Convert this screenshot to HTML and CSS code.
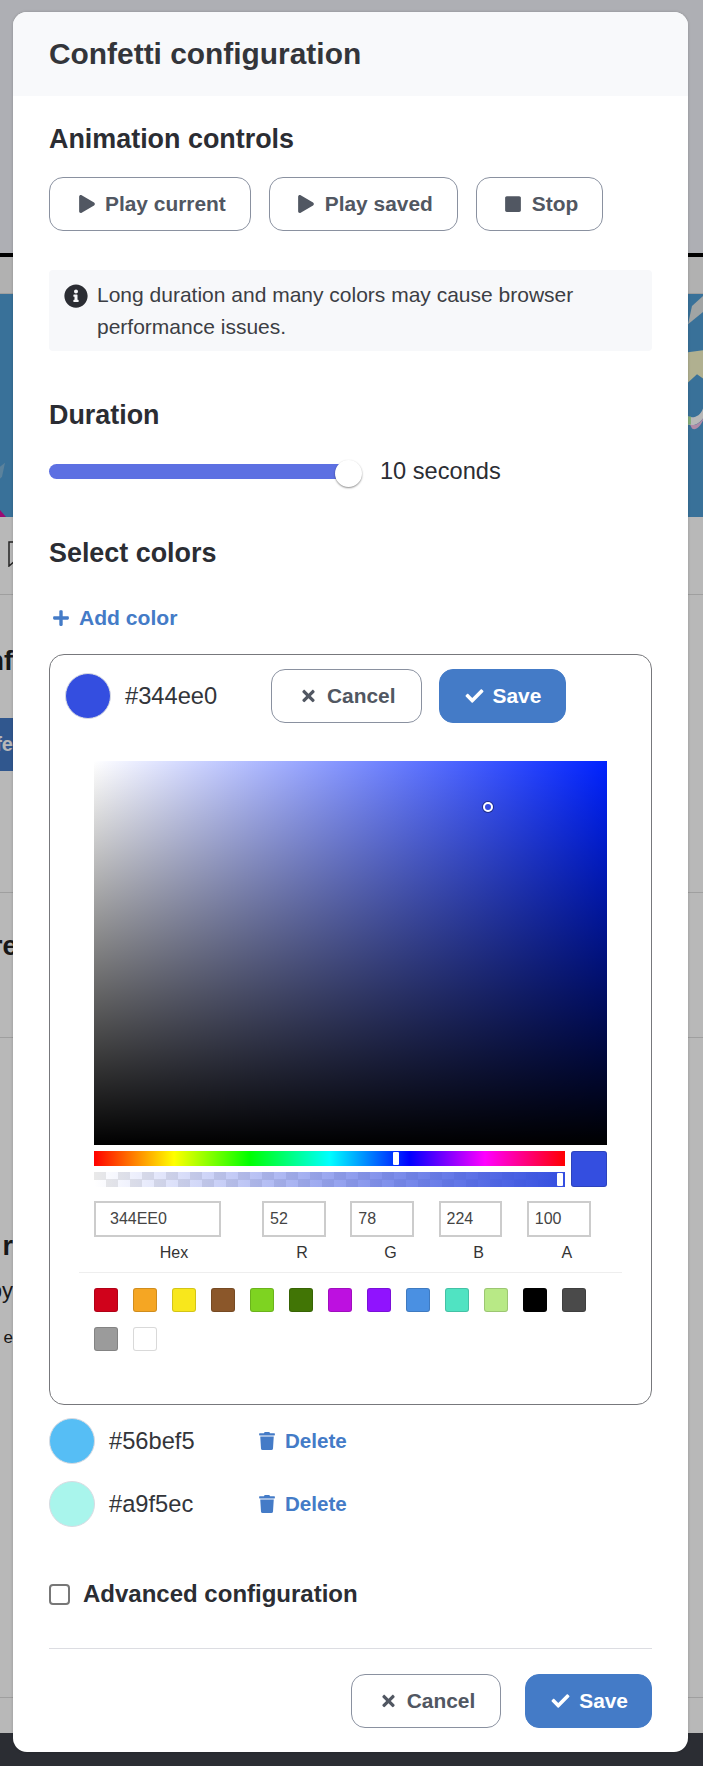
FILE: index.html
```html
<!DOCTYPE html>
<html lang="en">
<head>
<meta charset="utf-8">
<title>Confetti configuration</title>
<link rel="stylesheet" href="styles.css">
</head>
<body>
<div class="page">
  <div class="bg-top"></div>
  <div class="bg-rule"></div>
  <div class="bg-nav"></div>
  <svg class="bg-hero" viewBox="0 0 703 222" preserveAspectRatio="none">
    <rect width="703" height="222" fill="#4f9dd4"/>
    <path d="M0 215 L6 222 L0 222Z" fill="#d80fa0"/>
    <path d="M0 172 L5 168 L2 182 L0 184Z" fill="#7fb4d8"/>
    <path d="M703 2 L703 18 L688 30 L692 12Z" fill="#dfe3e3"/>
    <path d="M688 58 L703 56 L703 84 L697 80 L688 88Z" fill="#f4f4c8"/>
    <path d="M688 122 C694 124 700 122 703 114 L703 124 C698 130 694 132 688 130Z" fill="#fff"/>
    <path d="M688 122 L691 122 L691 130 L688 130Z" fill="#b8f0a8"/>
    <path d="M690 130 C696 132 700 128 703 124 L703 126 C700 132 696 136 692 134Z" fill="#f4c0e8"/>
  </svg>
  <div class="bg-bar">
    <svg class="bg-flag" viewBox="0 0 8 26"><path d="M8 1H1V25L8 19" fill="none" stroke="#333" stroke-width="1.5"/></svg>
  </div>
  <div class="bg-sec bg-sec-a">
    <div class="clip clip-h">nf</div>
    <div class="clip bg-btn">fe</div>
  </div>
  <div class="bg-sec bg-sec-b"><div class="clip clip-h clip-re">re</div></div>
  <div class="bg-sec bg-sec-c">
    <div class="clip clip-h">r</div>
    <div class="clip clip-t">py</div>
    <div class="clip clip-s">e</div>
  </div>
  <div class="bg-foot-light"></div>
  <div class="bg-foot"></div>

  <div class="overlay"></div>

  <div class="modal">
    <header class="modal-head"><h1>Confetti configuration</h1></header>
    <div class="modal-body">
      <h2 class="h-anim">Animation controls</h2>
      <div class="btn-row">
        <button class="btn btn-outline"><span class="ico"><svg width="16" height="18" viewBox="0 0 448 512"><path d="M424.4 214.7L72.4 6.6C43.8-10.3 0 6.1 0 47.9V464c0 37.5 40.7 60.1 72.4 41.3l352-208c31.4-18.5 31.5-64.1 0-82.6z"/></svg></span>Play current</button>
        <button class="btn btn-outline"><span class="ico"><svg width="16" height="18" viewBox="0 0 448 512"><path d="M424.4 214.7L72.4 6.6C43.8-10.3 0 6.1 0 47.9V464c0 37.5 40.7 60.1 72.4 41.3l352-208c31.4-18.5 31.5-64.1 0-82.6z"/></svg></span>Play saved</button>
        <button class="btn btn-outline"><span class="ico"><svg width="16" height="18" viewBox="0 0 448 512"><path d="M400 32H48C21.5 32 0 53.5 0 80v352c0 26.5 21.5 48 48 48h352c26.5 0 48-21.5 48-48V80c0-26.5-21.5-48-48-48z"/></svg></span>Stop</button>
      </div>
      <div class="notice">
        <svg class="notice-ico" width="24" height="24" viewBox="0 0 512 512"><path d="M256 8C119.043 8 8 119.083 8 256c0 136.997 111.043 248 248 248s248-111.003 248-248C504 119.083 392.957 8 256 8zm0 110c23.196 0 42 18.804 42 42s-18.804 42-42 42-42-18.804-42-42 18.804-42 42-42zm56 254c0 6.627-5.373 12-12 12h-88c-6.627 0-12-5.373-12-12v-24c0-6.627 5.373-12 12-12h12v-64h-12c-6.627 0-12-5.373-12-12v-24c0-6.627 5.373-12 12-12h64c6.627 0 12 5.373 12 12v100h12c6.627 0 12 5.373 12 12v24z"/></svg>
        <p>Long duration and many colors may cause browser performance issues.</p>
      </div>
      <h2 class="h-dur">Duration</h2>
      <div class="dur-row">
        <div class="slider"><div class="track"></div><div class="thumb"></div></div>
        <span class="dur-val">10 seconds</span>
      </div>
      <h2 class="h-col">Select colors</h2>
      <div class="add-color"><span class="ico ico-add"><svg width="16" height="18" viewBox="0 0 448 512"><path d="M416 208H272V64c0-17.67-14.33-32-32-32h-32c-17.67 0-32 14.33-32 32v144H32c-17.67 0-32 14.33-32 32v32c0 17.67 14.33 32 32 32h144v144c0 17.67 14.33 32 32 32h32c17.67 0 32-14.33 32-32V304h144c17.67 0 32-14.33 32-32v-32c0-17.67-14.33-32-32-32z"/></svg></span>Add color</div>

      <div class="card">
        <div class="card-row">
          <span class="dot dot-a"></span>
          <span class="hex hex-card">#344ee0</span>
          <div class="card-btns">
            <button class="btn btn-outline"><span class="ico"><svg width="13" height="18" viewBox="0 0 352 512"><path d="M242.72 256l100.07-100.07c12.28-12.28 12.28-32.19 0-44.48l-22.24-22.24c-12.28-12.28-32.19-12.28-44.48 0L176 189.28 75.93 89.21c-12.28-12.28-32.19-12.28-44.48 0L9.21 111.45c-12.28 12.28-12.28 32.19 0 44.48L109.28 256 9.21 356.07c-12.28 12.28-12.28 32.19 0 44.48l22.24 22.24c12.28 12.28 32.2 12.28 44.48 0L176 322.72l100.07 100.07c12.28 12.28 32.2 12.28 44.48 0l22.24-22.24c12.28-12.28 12.28-32.19 0-44.48L242.72 256z"/></svg></span>Cancel</button>
            <button class="btn btn-solid"><span class="ico"><svg width="19" height="18" viewBox="0 0 512 512"><path d="M173.898 439.404l-166.4-166.4c-9.997-9.997-9.997-26.206 0-36.204l36.203-36.204c9.997-9.998 26.207-9.998 36.204 0L192 312.69 432.095 72.596c9.997-9.997 26.207-9.997 36.204 0l36.203 36.204c9.997 9.997 9.997 26.206 0 36.204l-294.4 294.401c-9.998 9.997-26.207 9.997-36.204-.001z"/></svg></span>Save</button>
          </div>
        </div>
        <div class="picker">
          <div class="picker-main">
            <div class="sat"><span class="sat-ptr"></span></div>
            <div class="sliders">
              <div class="bars">
                <div class="bar hue"><span class="bar-ptr hue-ptr"></span></div>
                <div class="bar alpha"><span class="bar-ptr alpha-ptr"></span></div>
              </div>
              <div class="preview"></div>
            </div>
            <div class="fields">
              <label class="field field-hex"><input class="inp inp-hex" value="344EE0" aria-label="Hex"><span>Hex</span></label>
              <label class="field"><input class="inp" value="52" aria-label="R"><span>R</span></label>
              <label class="field"><input class="inp" value="78" aria-label="G"><span>G</span></label>
              <label class="field"><input class="inp" value="224" aria-label="B"><span>B</span></label>
              <label class="field"><input class="inp" value="100" aria-label="A"><span>A</span></label>
            </div>
          </div>
          <div class="presets">
            <span class="preset p1"></span><span class="preset p2"></span><span class="preset p3"></span><span class="preset p4"></span><span class="preset p5"></span><span class="preset p6"></span><span class="preset p7"></span><span class="preset p8"></span><span class="preset p9"></span><span class="preset p10"></span><span class="preset p11"></span><span class="preset p12"></span><span class="preset p13"></span><span class="preset p14"></span><span class="preset p15"></span>
          </div>
        </div>
      </div>

      <div class="color-row">
        <span class="dot dot-b"></span>
        <span class="hex hex-list">#56bef5</span>
        <span class="del"><span class="ico"><svg width="16" height="18" viewBox="0 0 448 512"><path d="M432 32H312l-9.4-18.7A24 24 0 0 0 281.1 0H166.8a23.72 23.72 0 0 0-21.4 13.3L136 32H16A16 16 0 0 0 0 48v32a16 16 0 0 0 16 16h416a16 16 0 0 0 16-16V48a16 16 0 0 0-16-16zM53.2 467a48 48 0 0 0 47.9 45h245.8a48 48 0 0 0 47.9-45L416 128H32z"/></svg></span>Delete</span>
      </div>
      <div class="color-row">
        <span class="dot dot-c"></span>
        <span class="hex hex-list">#a9f5ec</span>
        <span class="del"><span class="ico"><svg width="16" height="18" viewBox="0 0 448 512"><path d="M432 32H312l-9.4-18.7A24 24 0 0 0 281.1 0H166.8a23.72 23.72 0 0 0-21.4 13.3L136 32H16A16 16 0 0 0 0 48v32a16 16 0 0 0 16 16h416a16 16 0 0 0 16-16V48a16 16 0 0 0-16-16zM53.2 467a48 48 0 0 0 47.9 45h245.8a48 48 0 0 0 47.9-45L416 128H32z"/></svg></span>Delete</span>
      </div>

      <div class="adv"><span class="check"></span><span class="adv-label">Advanced configuration</span></div>
      <div class="foot">
        <button class="btn btn-outline"><span class="ico"><svg width="13" height="18" viewBox="0 0 352 512"><path d="M242.72 256l100.07-100.07c12.28-12.28 12.28-32.19 0-44.48l-22.24-22.24c-12.28-12.28-32.19-12.28-44.48 0L176 189.28 75.93 89.21c-12.28-12.28-32.19-12.28-44.48 0L9.21 111.45c-12.28 12.28-12.28 32.19 0 44.48L109.28 256 9.21 356.07c-12.28 12.28-12.28 32.19 0 44.48l22.24 22.24c12.28 12.28 32.2 12.28 44.48 0L176 322.72l100.07 100.07c12.28 12.28 32.2 12.28 44.48 0l22.24-22.24c12.28-12.28 12.28-32.19 0-44.48L242.72 256z"/></svg></span>Cancel</button>
        <button class="btn btn-solid"><span class="ico"><svg width="19" height="18" viewBox="0 0 512 512"><path d="M173.898 439.404l-166.4-166.4c-9.997-9.997-9.997-26.206 0-36.204l36.203-36.204c9.997-9.998 26.207-9.998 36.204 0L192 312.69 432.095 72.596c9.997-9.997 26.207-9.997 36.204 0l36.203 36.204c9.997 9.997 9.997 26.206 0 36.204l-294.4 294.401c-9.998 9.997-26.207 9.997-36.204-.001z"/></svg></span>Save</button>
      </div>
    </div>
  </div>
</div>
</body>
</html>
```
FILE: styles.css
```css
* { box-sizing: border-box; }
html, body { margin: 0; padding: 0; }
body { font-family: "Liberation Sans", Arial, sans-serif; color: #2b2d33; background: #fff; }
.page { position: relative; width: 703px; height: 1766px; overflow: hidden; background: #fff; }

/* page behind the dialog */
.bg-top { height: 253px; background: #f2f3fa; }
.bg-rule { height: 4px; background: #000; }
.bg-nav { height: 37px; background: #f6f6f6; border-bottom: 1px solid #ddd; }
.bg-hero { display: block; width: 703px; height: 223px; }
.bg-bar { height: 78px; border-bottom: 1px solid #ddd; padding: 24px 0 0 8px; }
.bg-flag { display: block; width: 8px; height: 26px; }
.bg-sec { border-bottom: 1px solid #ddd; }
.bg-sec-a { height: 298px; padding-top: 50px; }
.bg-sec-b { height: 145px; padding-top: 37px; }
.bg-sec-c { height: 660px; padding-top: 192px; }
.clip { width: 13px; overflow: hidden; display: flex; justify-content: flex-end; white-space: nowrap; }
.clip-h { font-size: 27px; font-weight: 700; line-height: 32px; color: #222; }
.clip-re { display: block; text-indent: -8px; }
.bg-btn { margin-top: 41px; height: 53px; align-items: center; background: #4379c5; color: #fff; font-size: 20px; font-weight: 700; }
.clip-t { margin-top: 15px; font-size: 22px; line-height: 28px; color: #222; }
.clip-s { margin-top: 22px; font-size: 17px; line-height: 22px; color: #222; }
.bg-foot-light { height: 35px; }
.bg-foot { height: 40px; background: #3c3f47; }
.overlay { position: absolute; inset: 0; background: rgba(0, 0, 0, 0.28); }

/* dialog */
.modal { position: absolute; left: 13px; top: 12px; width: 675px; height: 1740px; background: #fff; border-radius: 14px; overflow: hidden; box-shadow: 0 0 3px rgba(0, 0, 0, 0.2); }
.modal-head { height: 84px; background: #f8f9fb; padding: 0 36px; display: flex; align-items: center; }
h1 { margin: 0; font-size: 29.9px; line-height: 36px; font-weight: 700; color: #33353a; }
h2 { margin: 0; font-size: 26.9px; line-height: 34px; font-weight: 700; color: #2b2d33; }
.modal-body { padding: 0 36px; }
.h-anim { padding-top: 26px; }
.btn-row { display: flex; gap: 18px; margin-top: 21px; }
.btn { display: inline-flex; align-items: center; height: 54px; padding: 0 24px 0 23px; border-radius: 14px; border: 1px solid #8a91a0; background: #fff; color: #515762; font: 700 20.9px "Liberation Sans", Arial, sans-serif; }
.btn svg { fill: currentColor; display: block; }
.ico { width: 27px; display: flex; justify-content: center; margin-right: 5px; flex: none; }
.btn-solid { background: #447bc7; border-color: #447bc7; color: #fff; padding: 0 23px 0 21px; }
.card-btns .btn-outline, .foot .btn-outline { padding-right: 25px; }
.card-btns .btn-solid { padding-right: 24px; }
.notice { margin-top: 39px; height: 81px; background: #f7f8fa; border-radius: 4px; padding: 9px 14px 0 15px; display: flex; }
.notice-ico { flex: none; margin: 5px 9px 0 0; fill: #2b2d33; }
.notice p { margin: 0; font-size: 21px; line-height: 32px; color: #3c3e44; }
.h-dur { margin-top: 47px; }
.dur-row { display: flex; align-items: center; margin-top: 24.5px; height: 34px; }
.slider { position: relative; width: 313px; height: 27px; }
.track { position: absolute; left: 0; right: 10px; top: 4px; height: 15px; border-radius: 8px; background: #5d70e2; }
.thumb { position: absolute; right: 0; top: 0; width: 27px; height: 27px; border-radius: 50%; background: #fff; box-shadow: 0 1px 2px rgba(0, 0, 0, 0.45); }
.dur-val { margin-left: 18px; font-size: 23.6px; color: #2b2d33; position: relative; top: -2px; }
.h-col { margin-top: 45.5px; }
.add-color { display: flex; align-items: center; margin-top: 33px; height: 30px; color: #447bc7; font-size: 21.1px; font-weight: 700; }
.add-color svg { fill: currentColor; display: block; }
.ico-add { width: 24px; margin-right: 6px; }

.card { margin-top: 20.5px; height: 751px; border: 1px solid #77787c; border-radius: 15px; padding: 14.5px 0 0 15px; }
.card-row { display: flex; align-items: center; height: 54px; }
.dot { display: block; flex: none; width: 46px; height: 46px; border-radius: 50%; border: 1px solid #d8dbe2; }
.dot-a { background: #344ee0; }
.dot-b { background: #56bef5; }
.dot-c { background: #a9f5ec; }
.hex { font-size: 23.7px; color: #33353a; flex: none; }
.hex-card { margin-left: 14px; width: 146px; }
.card-btns { display: flex; gap: 17px; }
.picker { margin: 23px 0 0 14px; width: 543px; }
.picker-main { padding: 15px 15px 0 15px; }
.sat { position: relative; height: 384px; background: linear-gradient(to top, #000, rgba(0, 0, 0, 0)), linear-gradient(to right, #fff, #0022ff); }
.sat-ptr { position: absolute; left: 389px; top: 41px; width: 10px; height: 10px; border-radius: 50%; border: 2px solid #fff; box-shadow: 0 0 0 1px rgba(0, 0, 0, 0.4); }
.sliders { display: flex; gap: 6px; margin-top: 6px; }
.bars { flex: 1; display: flex; flex-direction: column; gap: 6px; }
.bar { position: relative; height: 15px; }
.hue { background: linear-gradient(to right, #f00 0%, #ff0 17%, #0f0 33%, #0ff 50%, #00f 67%, #f0f 83%, #f00 100%); }
.alpha { background: linear-gradient(to right, rgba(52, 78, 224, 0), #344ee0), repeating-conic-gradient(#fff 0 25%, #e9e9e9 0 50%) 0 0 / 24px 15px; }
.bar-ptr { position: absolute; top: 1px; width: 6px; height: 13px; border-radius: 1px; background: #fff; }
.hue-ptr { left: 299px; }
.alpha-ptr { left: 463px; }
.preview { flex: none; width: 36px; height: 36px; border-radius: 3px; background: #344ee0; box-shadow: inset 0 0 0 1px rgba(0, 0, 0, 0.15); }
.fields { display: flex; margin-top: 14px; }
.field { flex: 1; padding-left: 8px; display: flex; flex-direction: column; align-items: stretch; }
.field-hex { flex: none; width: 160px; padding-left: 0; }
.inp { width: 79.5%; height: 36px; border: 2px solid #ccc; padding: 0 0 0 6px; font: 16px "Liberation Sans", Arial, sans-serif; color: #444; background: #fff; outline: none; border-radius: 0; }
.inp-hex { padding-left: 14px; }
.field span { display: block; margin-top: 6px; text-align: center; font-size: 16px; line-height: 20px; color: #333; }
.presets { margin-top: 9px; border-top: 1px solid #eee; padding: 15px 0 0 15px; display: flex; flex-wrap: wrap; gap: 15px; }
.preset { width: 24px; height: 24px; border-radius: 3px; box-shadow: inset 0 0 0 1px rgba(0, 0, 0, 0.15); }
.p1 { background: #d0021b; } .p2 { background: #f5a623; } .p3 { background: #f8e71c; }
.p4 { background: #8b572a; } .p5 { background: #7ed321; } .p6 { background: #417505; }
.p7 { background: #bd10e0; } .p8 { background: #9013fe; } .p9 { background: #4a90e2; }
.p10 { background: #50e3c2; } .p11 { background: #b8e986; } .p12 { background: #000; }
.p13 { background: #4a4a4a; } .p14 { background: #9b9b9b; } .p15 { background: #fff; }

.color-row { display: flex; align-items: center; margin-top: 13.5px; height: 46px; }
.color-row + .color-row { margin-top: 17px; }
.hex-list { margin-left: 14px; width: 144px; }
.del { display: flex; align-items: center; color: #447bc7; font-size: 20.6px; font-weight: 700; }
.del svg { fill: currentColor; display: block; }
.adv { display: flex; align-items: center; margin-top: 55px; height: 24px; }
.check { width: 21px; height: 21px; border: 2px solid #777; border-radius: 4px; flex: none; }
.adv-label { margin-left: 13px; font-size: 24px; font-weight: 700; color: #2b2d33; }
.foot { margin-top: 42px; padding-top: 25px; border-top: 1px solid #dcdde2; display: flex; justify-content: flex-end; gap: 24px; }
```
